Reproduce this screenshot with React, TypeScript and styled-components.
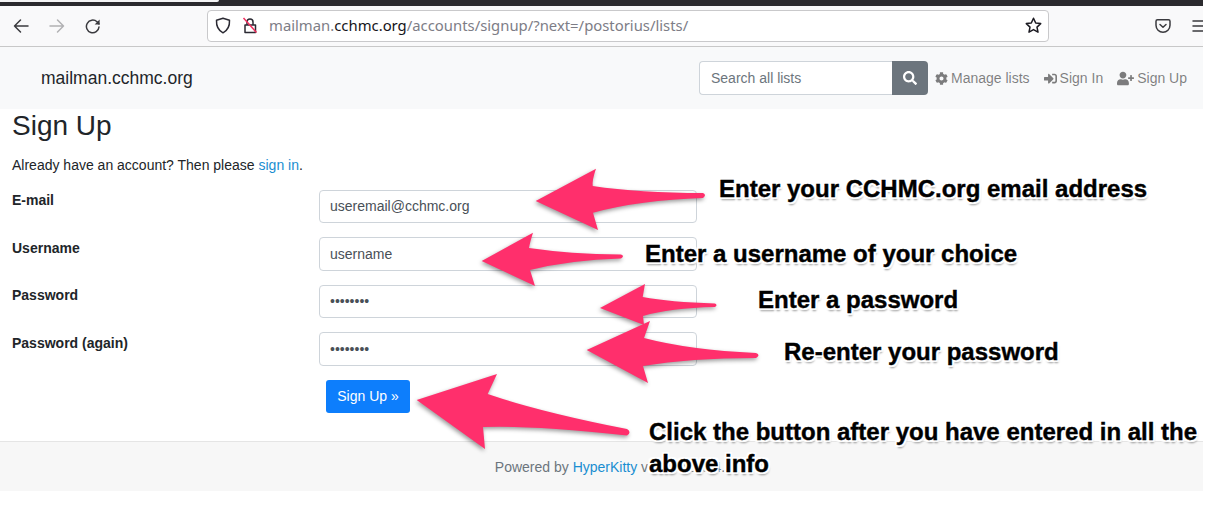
import React from "react";
import styled, { createGlobalStyle } from "styled-components";
import { FaCog, FaSearch, FaSignInAlt, FaUserPlus } from "react-icons/fa";

const Global = createGlobalStyle`
  html, body { margin: 0; padding: 0; background: #fff; }
  body { font-family: "Liberation Sans", Arial, sans-serif; font-size: 14px; line-height: 21px; color: #212529; }
  * { box-sizing: border-box; }
`;

const Screen = styled.div`
  position: relative;
  width: 1208px;
  height: 510px;
  overflow: hidden;
  background: #fff;
`;
const Page = styled.div`
  width: 1203px;
`;
const TabStrip = styled.div`
  position: relative;
  height: 6px;
  background: #2b2a2e;
`;
const ActiveTab = styled.div`
  width: 219px;
  height: 2px;
  background: #f4f4f5;
  border-bottom-right-radius: 2px;
`;
const Toolbar = styled.div`
  display: flex;
  align-items: center;
  height: 41px;
  background: #f9f9fa;
  border-bottom: 1px solid #c8c8c8;
  padding-bottom: 1px;
`;
const ToolButton = styled.span<{ $w: number }>`
  display: flex;
  justify-content: center;
  align-items: center;
  width: ${(p) => p.$w}px;
  flex: none;
`;
const NavCluster = styled.div`
  display: flex;
  align-items: center;
  width: 207px;
  padding-left: 3px;
  flex: none;
`;
const UrlBar = styled.div`
  display: flex;
  align-items: center;
  width: 842px;
  height: 32px;
  background: #fff;
  border: 1px solid #c9c9cb;
  border-radius: 4px;
  padding-left: 6px;
  padding-right: 6px;
  flex: none;
`;
const UrlText = styled.div`
  flex: 1;
  margin-left: 1px;
  font-family: "Noto Sans", "Open Sans", sans-serif;
  font-size: 14.85px;
  color: #7d7d86;
  white-space: nowrap;
`;
const UrlHost = styled.span`
  color: #15141a;
`;
const RightTools = styled.div`
  display: flex;
  align-items: center;
  flex: 1;
  overflow: hidden;
  padding-left: 106px;
  gap: 21px;
`;
const Navbar = styled.nav`
  display: flex;
  align-items: center;
  height: 62px;
  background: #f8f9fa;
  padding: 0 16px 0 41px;
`;
const Brand = styled.div`
  flex: 1;
  font-size: 17.5px;
  color: #212529;
`;
const SearchGroup = styled.div`
  display: flex;
  width: 229px;
  height: 34px;
  margin-right: 7px;
`;
const SearchInput = styled.input`
  flex: 1;
  min-width: 0;
  background: #fff;
  border: 1px solid #ced4da;
  border-right: 0;
  border-radius: 4px 0 0 4px;
  padding: 0 11px;
  font: inherit;
  outline: none;
  &::placeholder {
    color: #6c757d;
    opacity: 1;
  }
`;
const SearchButton = styled.div`
  display: flex;
  align-items: center;
  justify-content: center;
  width: 36px;
  background: #6c757d;
  color: #fff;
  font-size: 14px;
  border-radius: 0 4px 4px 0;
`;
const NavLinks = styled.div`
  display: flex;
  gap: 14px;
`;
const NavLink = styled.a`
  display: flex;
  align-items: center;
  gap: 3px;
  color: rgba(0, 0, 0, 0.5);
  white-space: nowrap;
`;
const Main = styled.main`
  padding: 0 12px;
`;
const Title = styled.h1`
  margin: 0;
  font-size: 28px;
  font-weight: 400;
  line-height: 34px;
  color: #212529;
`;
const Intro = styled.p`
  margin: 12px 0 14px;
`;
const Link = styled.a`
  color: #1a8ed1;
`;
const Row = styled.div`
  display: flex;
  align-items: flex-start;
  margin-bottom: 14px;
`;
const Label = styled.label`
  width: 307px;
  flex: none;
  font-weight: 700;
  margin-top: 0.45px;
`;
const Field = styled.input`
  display: block;
  width: 378px;
  height: 33.4px;
  background: #fff;
  border: 1px solid #ced4da;
  border-radius: 4px;
  padding: 0 10px 0.6px;
  font: inherit;
  color: #495057;
  outline: none;
`;
const SubmitRow = styled.div`
  padding-left: 314px;
  margin-bottom: 28px;
`;
const Submit = styled.button`
  display: block;
  width: 84px;
  height: 33px;
  padding: 0;
  background: #0d7efc;
  border: 0;
  color: #fff;
  font: inherit;
  border-radius: 3px;
  text-align: center;
  white-space: nowrap;
`;
const Footer = styled.footer`
  height: 50px;
  background: #f7f7f7;
  border-top: 1px solid #e5e5e5;
  padding: 15px 0 0 17px;
  text-align: center;
  color: #6c757d;
`;
const ArrowLayer = styled.svg`
  position: absolute;
  left: 0;
  top: 0;
  width: 1208px;
  height: 510px;
  pointer-events: none;
  filter: drop-shadow(-1px 2px 2px rgba(0, 0, 0, 0.4));
`;
const Note = styled.div<{ $x: number; $y: number }>`
  position: absolute;
  left: ${(p) => p.$x}px;
  top: ${(p) => p.$y}px;
  font-family: "Liberation Sans", Arial, sans-serif;
  font-weight: 700;
  font-size: 24px;
  line-height: 35px;
  color: #000;
  white-space: nowrap;
  -webkit-text-stroke: 0.4px #000;
  text-shadow: 2px 0 1px #fff, -2px 0 1px #fff, 0 2px 1px #fff, 0 -2px 1px #fff, 2px 2px 1px #fff,
    -2px 2px 1px #fff, 2px -2px 1px #fff, -2px -2px 1px #fff, 1px 3px 2px rgba(0, 0, 0, 0.45);
`;

const arrows = [
  "M535.7 201 L596 168.7 Q592 180 592.7 186 Q640 193 703 193 Q707 195 703 198 Q640 200 593 212.7 L598 230 Z",
  "M481.7 261 L533 232.7 Q530 242 529 248 Q570 254 621 254.5 Q625 256 621 258.5 Q570 260 530 270 L535 286 Z",
  "M600 308 L645 284 L642.7 297 Q670 302 715 303.5 Q718 305 715 307 Q670 308 643 316 L644 325 Z",
  "M586.7 350 L650 321 L644 338 Q690 350 756 353 Q761 355 756 358 Q690 358 643 366 L648 383 Z",
  "M416.7 400 L497 374 L487.7 394 Q540 412 627 429 Q632 432 627 435.5 Q530 425 483 427 L485 449 Z",
];

const ico = { fill: "none", stroke: "#3a3a3e", strokeWidth: 1.5, strokeLinecap: "round" as const, strokeLinejoin: "round" as const };

export default function App() {
  return (
    <Screen>
      <Global />
      <Page>
        <TabStrip><ActiveTab /></TabStrip>
        <Toolbar>
          <NavCluster>
            <ToolButton $w={36}>
              <svg width="16" height="16" viewBox="0 0 16 16" {...ico}><path d="M15 8H1.5M7.5 2 1.5 8l6 6" /></svg>
            </ToolButton>
            <ToolButton $w={36}>
              <svg width="16" height="16" viewBox="0 0 16 16" {...ico} stroke="#b1b1b3"><path d="M1 8h13.5M8.5 2l6 6-6 6" /></svg>
            </ToolButton>
            <ToolButton $w={36}>
              <svg width="16" height="16" viewBox="0 0 16 16" {...ico}><path d="M14 9a6.3 6.3 0 1 1-2-5.2L14 6" /><path d="M14.6 1.5v5h-5z" fill="#3a3a3e" stroke="none" /></svg>
            </ToolButton>
          </NavCluster>
          <UrlBar>
            <ToolButton $w={18}>
              <svg width="16" height="17" viewBox="0 0 16 17" {...ico} stroke="#2b2a33"><path d="M8 1.2 14.5 3.2c.3 5.5-1.6 10-6.5 12.6C3.1 13.2 1.2 8.7 1.5 3.2z" /></svg>
            </ToolButton>
            <ToolButton $w={36}>
              <svg width="16" height="17" viewBox="0 0 16 17" fill="none">
                <path d="M5 7.5V5a3 3 0 0 1 6 0v2.5M3 8h10.5v7.5H3z" stroke="#2b2a33" strokeWidth="1.5" strokeLinejoin="round" />
                <path d="M1.5 1 14.5 15.5" stroke="#f0305f" strokeWidth="1.5" />
              </svg>
            </ToolButton>
            <UrlText>mailman.<UrlHost>cchmc.org</UrlHost>/accounts/signup/?next=/postorius/lists/</UrlText>
            <svg width="17" height="17" viewBox="0 0 17 17" {...ico} stroke="#1c1b22"><path d="M8.5 1.3l2.2 4.7 5 .6-3.7 3.5 1 5.1-4.5-2.6L4 15.2l1-5.1L1.3 6.600l5-.6z" /></svg>
          </UrlBar>
          <RightTools>
            <svg width="16" height="16" viewBox="0 0 16 16" {...ico} style={{ flex: "none" }}><path d="M2.5 1.8h11a1.5 1.5 0 0 1 1.5 1.5v4a7 7 0 0 1-14 0v-4a1.5 1.5 0 0 1 1.5-1.5z" /><path d="M5 6.5 8 9.3l3-2.800" /></svg>
            <svg width="16" height="16" viewBox="0 0 16 16" {...ico} style={{ flex: "none" }}><path d="M1 3h14M1 8h14M1 13h14" /></svg>
          </RightTools>
        </Toolbar>
        <Navbar>
          <Brand>mailman.cchmc.org</Brand>
          <SearchGroup>
            <SearchInput placeholder="Search all lists" readOnly />
            <SearchButton><FaSearch /></SearchButton>
          </SearchGroup>
          <NavLinks>
            <NavLink><FaCog size={13} />Manage lists</NavLink>
            <NavLink><FaSignInAlt size={13} />Sign In</NavLink>
            <NavLink><FaUserPlus size={17} />Sign Up</NavLink>
          </NavLinks>
        </Navbar>
        <Main>
          <Title>Sign Up</Title>
          <Intro>Already have an account? Then please <Link>sign in</Link>.</Intro>
          <Row><Label>E-mail</Label><Field type="email" defaultValue="useremail@cchmc.org" readOnly /></Row>
          <Row><Label>Username</Label><Field type="text" defaultValue="username" readOnly /></Row>
          <Row><Label>Password</Label><Field type="password" defaultValue="password" readOnly /></Row>
          <Row><Label>Password (again)</Label><Field type="password" defaultValue="password" readOnly /></Row>
          <SubmitRow><Submit type="button">Sign Up »</Submit></SubmitRow>
        </Main>
        <Footer>Powered by <Link>HyperKitty</Link> version 1.3.4.</Footer>
      </Page>
      <ArrowLayer viewBox="0 0 1208 510">
        {arrows.map((d) => <path key={d} d={d} fill="#ff2f6c" />)}
      </ArrowLayer>
      <Note $x={719} $y={171}>Enter your CCHMC.org email address</Note>
      <Note $x={645} $y={236}>Enter a username of your choice</Note>
      <Note $x={758} $y={282}>Enter a password</Note>
      <Note $x={784} $y={334}>Re-enter your password</Note>
      <Note $x={649} $y={414}>Click the button after you have entered in all the</Note>
      <Note $x={649} $y={446}>above info</Note>
    </Screen>
  );
}
